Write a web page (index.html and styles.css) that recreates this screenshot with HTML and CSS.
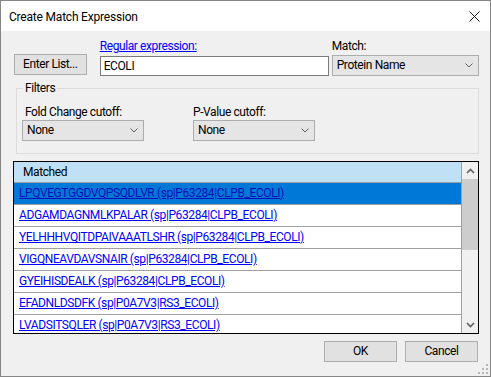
FILE: index.html
```html
<!DOCTYPE html>
<html lang="en">
<head>
  <meta charset="utf-8">
  <title>Create Match Expression</title>
  <link rel="stylesheet" href="styles.css">
</head>
<body>
  <div class="window">
    <div class="titlebar">
      <span class="title">Create Match Expression</span>
      <svg class="close" width="11" height="11" viewBox="0 0 11 11">
        <path d="M0.5 0.5 L10.5 10.5 M10.5 0.5 L0.5 10.5" stroke="#1a1a1a" stroke-width="1" fill="none"/>
      </svg>
    </div>

    <div class="client">
      <div class="top-row">
        <button class="btn btn-list">Enter List...</button>
        <div class="field field-regex">
          <a class="link" href="#">Regular expression:</a>
          <input class="textbox" type="text" value="ECOLI">
        </div>
        <div class="field field-match">
          <label>Match:</label>
          <div class="combo combo-match">
            <span>Protein Name</span>
            <svg class="chev" width="8" height="5" viewBox="0 0 8 5"><path d="M0.5 0.5 L4 4 L7.5 0.5" stroke="#606060" fill="none"/></svg>
          </div>
        </div>
      </div>

      <fieldset class="filters">
        <legend>Filters</legend>
        <div class="filter-row">
          <div class="field field-fold">
            <label>Fold Change cutoff:</label>
            <div class="combo combo-small">
              <span>None</span>
              <svg class="chev" width="8" height="5" viewBox="0 0 8 5"><path d="M0.5 0.5 L4 4 L7.5 0.5" stroke="#606060" fill="none"/></svg>
            </div>
          </div>
          <div class="field field-pval">
            <label>P-Value cutoff:</label>
            <div class="combo combo-small">
              <span>None</span>
              <svg class="chev" width="8" height="5" viewBox="0 0 8 5"><path d="M0.5 0.5 L4 4 L7.5 0.5" stroke="#606060" fill="none"/></svg>
            </div>
          </div>
        </div>
      </fieldset>

      <div class="list">
        <div class="list-body">
          <div class="list-head">Matched</div>
          <div class="row selected"><a href="#">LPQVEGTGGDVQPSQDLVR (sp|P63284|CLPB_ECOLI)</a></div>
          <div class="row"><a href="#">ADGAMDAGNMLKPALAR (sp|P63284|CLPB_ECOLI)</a></div>
          <div class="row"><a href="#">YELHHHVQITDPAIVAAATLSHR (sp|P63284|CLPB_ECOLI)</a></div>
          <div class="row"><a href="#">VIGQNEAVDAVSNAIR (sp|P63284|CLPB_ECOLI)</a></div>
          <div class="row"><a href="#">GYEIHISDEALK (sp|P63284|CLPB_ECOLI)</a></div>
          <div class="row"><a href="#">EFADNLDSDFK (sp|P0A7V3|RS3_ECOLI)</a></div>
          <div class="row"><a href="#">LVADSITSQLER (sp|P0A7V3|RS3_ECOLI)</a></div>
        </div>
        <div class="scrollbar">
          <div class="sb-btn">
            <svg width="9" height="6" viewBox="0 0 9 6"><path d="M1 5 L4.5 1.5 L8 5" stroke="#606060" stroke-width="1.6" fill="none"/></svg>
          </div>
          <div class="sb-thumb"></div>
          <div class="sb-track"></div>
          <div class="sb-btn">
            <svg width="9" height="6" viewBox="0 0 9 6"><path d="M1 1 L4.5 4.5 L8 1" stroke="#606060" stroke-width="1.6" fill="none"/></svg>
          </div>
        </div>
      </div>

      <div class="actions">
        <button class="btn">OK</button>
        <button class="btn">Cancel</button>
      </div>
    </div>

    <svg class="grip" width="10" height="10" viewBox="0 0 10 10">
      <rect x="8" y="0" width="2" height="2" fill="#b8b8b8"/>
      <rect x="4" y="4" width="2" height="2" fill="#b8b8b8"/>
      <rect x="8" y="4" width="2" height="2" fill="#b8b8b8"/>
      <rect x="0" y="8" width="2" height="2" fill="#b8b8b8"/>
      <rect x="4" y="8" width="2" height="2" fill="#b8b8b8"/>
      <rect x="8" y="8" width="2" height="2" fill="#b8b8b8"/>
    </svg>
  </div>
</body>
</html>
```

FILE: styles.css
```css
:root {
  --face: #f0f0f0;
  --btn-bg: #e1e1e1;
  --btn-border: #adadad;
  --combo-bg: #e5e5e5;
  --grid-line: #a0a0a0;
  --link: #0000ff;
  --select: #0078d7;
  --head: #bfe0f5;
}
* { box-sizing: border-box; }
body {
  margin: 0;
  font-family: Roboto, "Liberation Sans", Arial, sans-serif;
  font-size: 12px;
  letter-spacing: -0.4px;
  color: #000;
  background: #fff;
}
.window {
  position: relative;
  width: 491px;
  height: 377px;
  border: 1px solid #868686;
  background: var(--face);
  display: flex;
  flex-direction: column;
}
.titlebar {
  height: 30px;
  background: #fff;
  display: flex;
  align-items: center;
  justify-content: space-between;
  padding: 0 10px 0 8px;
  flex: none;
}
.title { font-size: 12px; padding-top: 1px; letter-spacing: -0.2px; }
.close { margin-top: 1px; }

.client {
  flex: 1;
  padding: 8px 11px 0 12px;
}
.top-row {
  display: flex;
  align-items: flex-start;
  height: 37px;
}
.field {
  display: flex;
  flex-direction: column;
}
.field label, .field .link {
  line-height: 15px;
  height: 15px;
  white-space: nowrap;
}
.link { color: var(--link); }

.btn {
  font-family: inherit;
  font-size: 12px;
  letter-spacing: inherit;
  color: #000;
  height: 21px;
  width: 73px;
  background: var(--btn-bg);
  border: 1px solid var(--btn-border);
  padding: 0;
  line-height: 19px;
}
.btn-list { margin: 15px 0 0 1px; }

.field-regex { margin-left: 13px; width: 229px; }
.textbox {
  margin-top: 2px;
  height: 20px;
  width: 229px;
  border: 1px solid #7a7a7a;
  background: #fff;
  font-family: inherit;
  font-size: 12px;
  letter-spacing: inherit;
  padding: 0 3px 1px;
  outline: none;
}
.field-match { margin-left: 3px; width: 148px; }

.combo {
  height: 21px;
  background: var(--combo-bg);
  border: 1px solid var(--btn-border);
  display: flex;
  align-items: center;
  justify-content: space-between;
  padding: 0 5px 1px 4px;
}
.combo .chev { margin-top: 1px; }
.combo-match { margin-top: 1px; }
.combo-small { width: 122px; }

.filters {
  margin: 5px 0 0 3px;
  padding: 0 0 12px 6px;
  border: 1px solid #dcdcdc;
  height: 73px;
}
.filters legend {
  padding: 0 2px;
  line-height: 14px;
}
.filter-row {
  display: flex;
  margin-top: 10px;
}
.field-fold { margin-left: -1px; }
.field-fold label { padding-left: 3px; }
.field-pval { margin-left: 49px; }

.list {
  margin-top: 7px;
  width: 466px;
  height: 173px;
  border: 1px solid #000;
  background: #fff;
  display: flex;
}
.list-body {
  flex: 1;
  overflow: hidden;
  border-right: 1px solid var(--grid-line);
}
.list-head {
  height: 21px;
  line-height: 20px;
  background: var(--head);
  border-bottom: 1px solid var(--grid-line);
  padding-left: 9px;
}
.row {
  height: 22px;
  line-height: 21px;
  border-bottom: 1px solid var(--grid-line);
  padding-left: 5px;
  white-space: nowrap;
}
.row a { color: var(--link); }
.row.selected { background: var(--select); }
.row.selected a { color: #0a10b8; }

.scrollbar {
  width: 16px;
  display: flex;
  flex-direction: column;
  background: var(--face);
}
.sb-btn {
  height: 17px;
  display: flex;
  align-items: center;
  justify-content: center;
  flex: none;
}
.sb-thumb {
  height: 71px;
  background: #cdcdcd;
  flex: none;
}
.sb-track { flex: 1; }

.actions {
  margin-top: 7px;
  display: flex;
  justify-content: flex-end;
  gap: 8px;
  padding-right: 1px;
}

.grip {
  position: absolute;
  right: 2px;
  bottom: 2px;
}
```
